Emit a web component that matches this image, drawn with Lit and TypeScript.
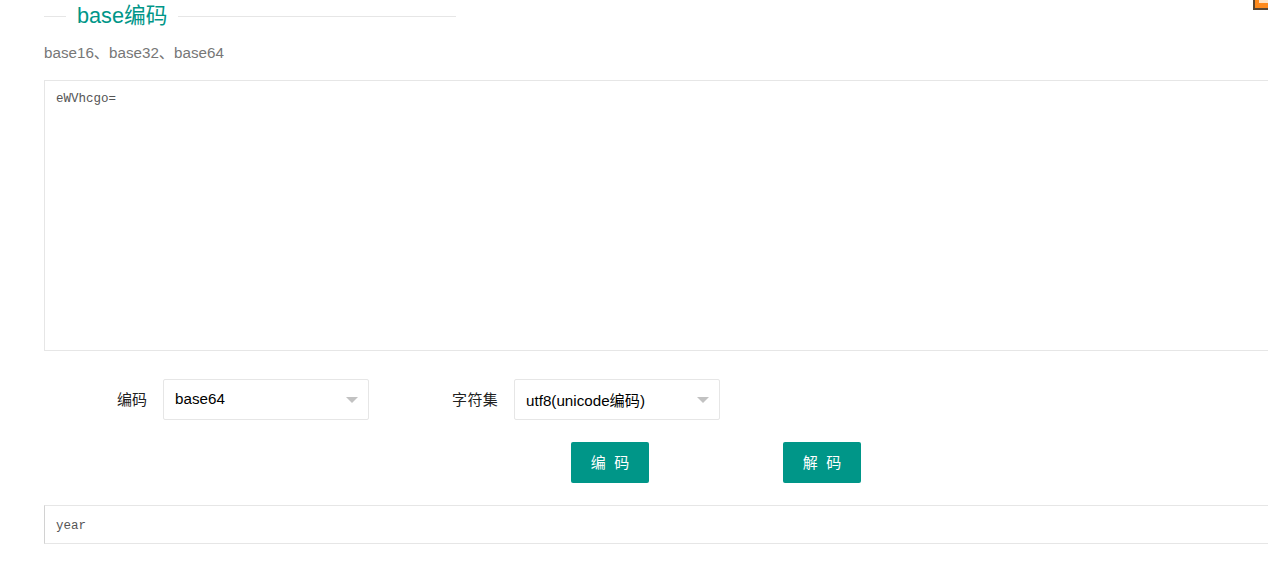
import { LitElement, css, html } from "lit";
import { customElement } from "lit/decorators.js";

@customElement("app-root")
export class AppRoot extends LitElement {
  static styles = css`
    :host {
      display: block;
      position: relative;
      width: 1268px;
      height: 585px;
      overflow: hidden;
      background: #fff;
      font-family: "Liberation Sans", "Noto Sans CJK SC", sans-serif;
      font-size: 14px;
      color: #000;
    }

    .page {
      display: flex;
      flex-direction: column;
      width: 1300px;
      padding: 4px 0 0 44px;
      box-sizing: border-box;
    }

    .title {
      display: flex;
      align-items: center;
      width: 412px;
      height: 24px;
      font-size: 21.7px;
      line-height: 24px;
      color: #009688;
    }

    .title i {
      height: 1px;
      background: #e6e6e6;
      margin-top: 1px;
    }

    .title i:first-child {
      width: 22px;
    }

    .title i:last-child {
      flex: 1;
    }

    .title span {
      padding: 0 11px;
    }

    .desc {
      margin-top: 14px;
      font-size: 15.2px;
      line-height: 22px;
      color: #777;
    }

    .code {
      box-sizing: border-box;
      border: 1px solid #e6e6e6;
      padding: 0 11px;
      font-family: "Liberation Mono", monospace;
      font-size: 12.5px;
      color: #555;
      background: #fff;
      outline: none;
      display: block;
      width: 100%;
    }

    .source {
      height: 271px;
      margin-top: 16px;
      padding-top: 10px;
      line-height: 16px;
      resize: none;
    }

    .form-row {
      display: flex;
      align-items: center;
      margin-top: 28px;
    }

    .label {
      box-sizing: border-box;
      padding-right: 16px;
      padding-bottom: 3px;
      text-align: right;
      font-size: 15px;
      color: #222;
    }

    .label.first {
      width: 119px;
    }

    .label.second {
      width: 145px;
      letter-spacing: 0.3px;
    }

    .select {
      box-sizing: border-box;
      display: flex;
      align-items: center;
      justify-content: space-between;
      width: 206px;
      height: 41px;
      padding: 0 10px 2px 11px;
      border: 1px solid #e6e6e6;
      border-radius: 2px;
      font-size: 15.2px;
    }

    .caret {
      width: 0;
      height: 0;
      margin-top: 3px;
      border-style: solid;
      border-width: 6px 6px 0;
      border-color: #c2c2c2 transparent transparent;
    }

    .actions {
      display: flex;
      gap: 134px;
      margin: 22px 0 0 527px;
    }

    .btn {
      width: 78px;
      height: 41px;
      border: none;
      border-radius: 2px;
      padding: 0 0 2px;
      background: #009688;
      color: #fff;
      font-family: inherit;
      font-size: 15px;
      letter-spacing: 0;
    }

    .result {
      height: 39px;
      margin-top: 22px;
      border-left-color: #d2d2d2;
      padding-top: 2px;
    }

    .corner {
      position: absolute;
      top: 0;
      right: 0;
      width: 15px;
      height: 10px;
      box-sizing: border-box;
      border-left: 2px solid #5a4632;
      border-bottom: 2px solid #5a4632;
      background: #ff8a1c;
    }

    .corner::after {
      content: "";
      display: block;
      width: 9px;
      height: 3px;
      margin-left: 4px;
      background: #ffe3c4;
    }
  `;

  render() {
    return html`
      <div class="page">
        <div class="title"><i></i><span>base编码</span><i></i></div>
        <div class="desc">base16、base32、base64</div>
        <textarea class="code source" .value=${"eWVhcgo="}></textarea>
        <div class="form-row">
          <div class="label first">编码</div>
          <div class="select">base64<span class="caret"></span></div>
          <div class="label second">字符集</div>
          <div class="select">utf8(unicode编码)<span class="caret"></span></div>
        </div>
        <div class="actions">
          <button class="btn">编&nbsp;&nbsp;码</button>
          <button class="btn">解&nbsp;&nbsp;码</button>
        </div>
        <input class="code result" .value=${"year"} />
      </div>
      <div class="corner"></div>
    `;
  }
}
